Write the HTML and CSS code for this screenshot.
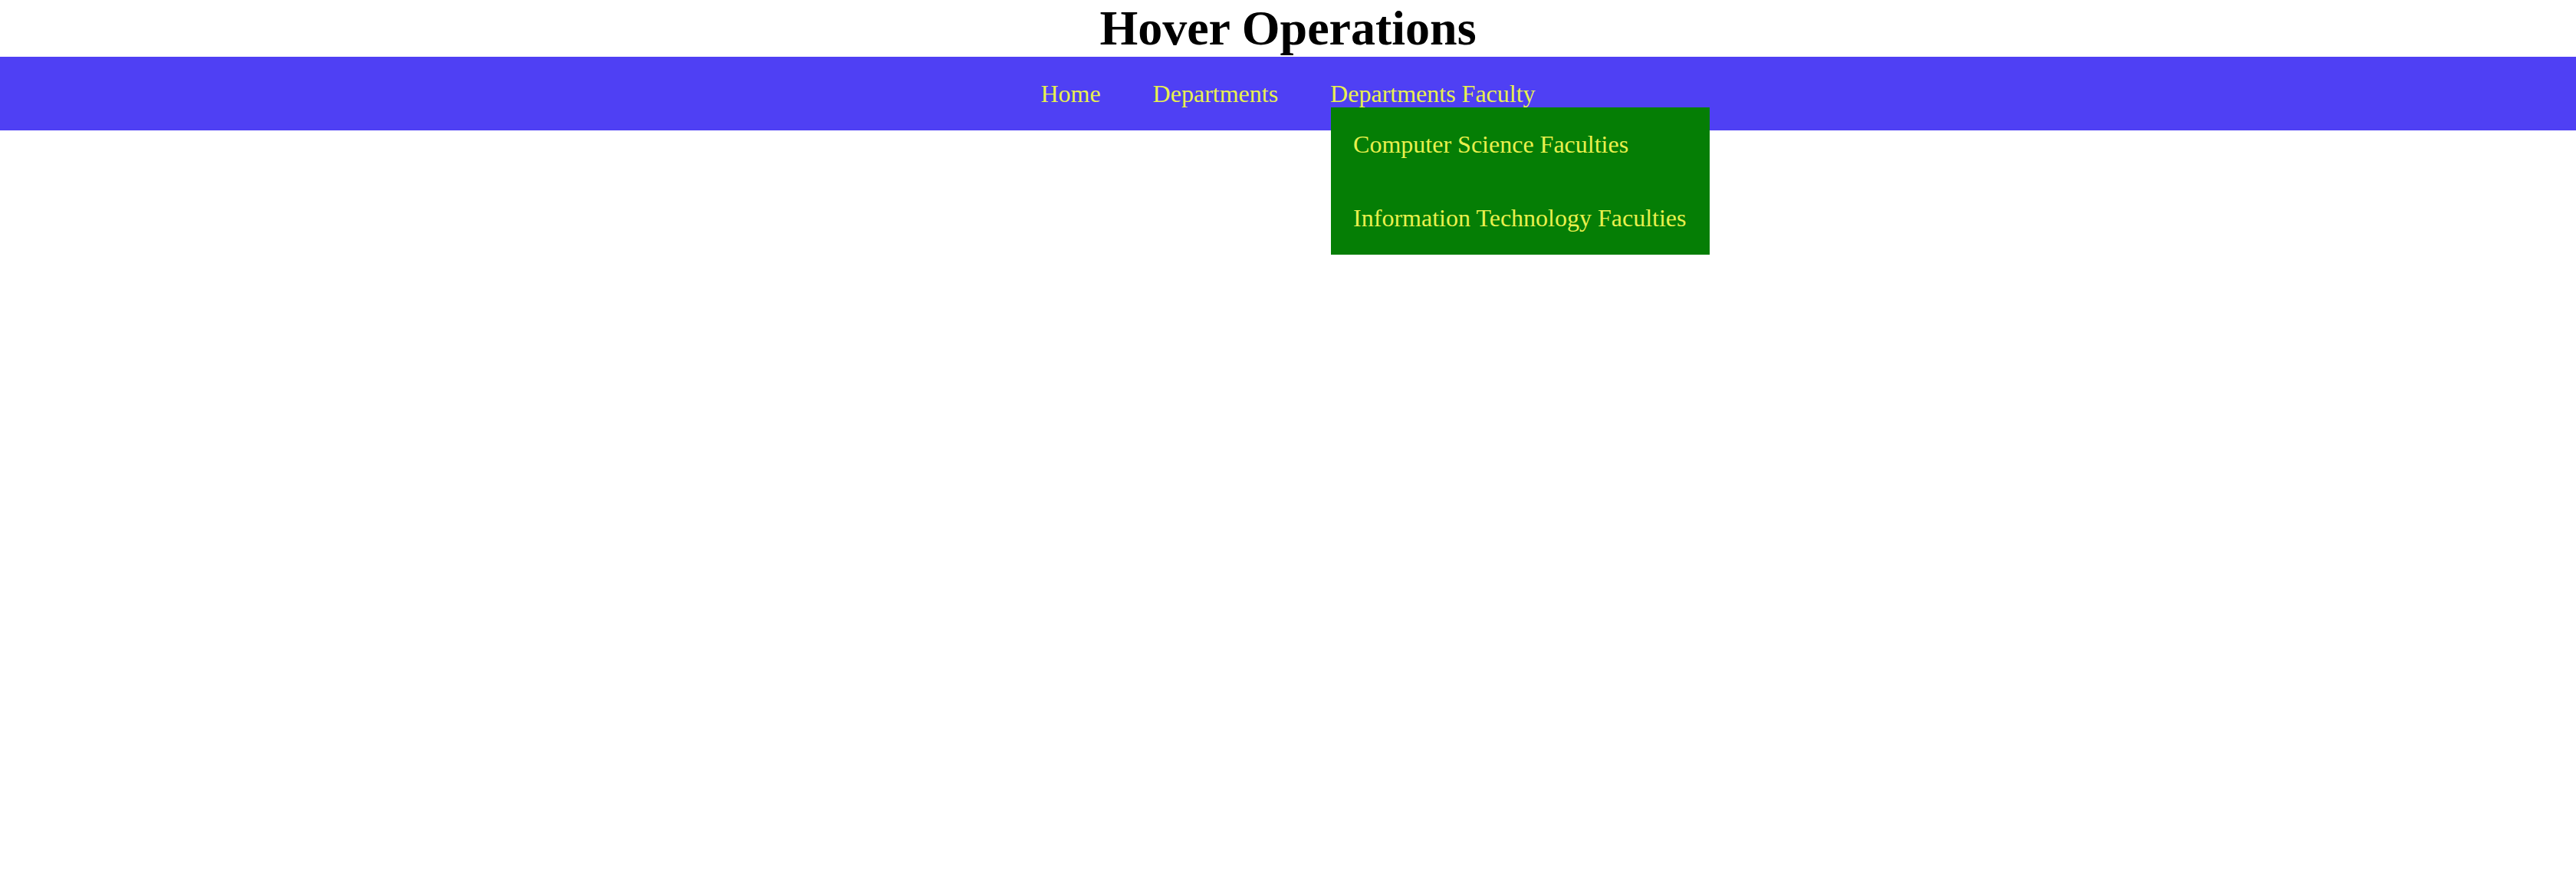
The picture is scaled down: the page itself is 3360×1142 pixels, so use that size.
FILE: index.html
```html
<!DOCTYPE html>
<html lang="en">
<head>
<meta charset="utf-8">
<title>Hover Operations</title>
<link rel="stylesheet" href="styles.css">
</head>
<body>
<h1 class="title">Hover Operations</h1>
<nav class="navbar">
  <ul class="menu">
    <li class="menu-item"><a class="menu-link" href="#">Home</a></li>
    <li class="menu-item"><a class="menu-link" href="#">Departments</a></li>
    <li class="menu-item has-dropdown">
      <a class="menu-link" href="#">Departments Faculty</a>
      <ul class="dropdown">
        <li class="dropdown-item"><a class="dropdown-link" href="#">Computer Science Faculties</a></li>
        <li class="dropdown-item"><a class="dropdown-link" href="#">Information Technology Faculties</a></li>
      </ul>
    </li>
  </ul>
</nav>
</body>
</html>
```
FILE: styles.css
```css
html, body {
  margin: 0;
  padding: 0;
  background: #ffffff;
  font-family: "Liberation Serif", "Times New Roman", serif;
}

body {
  min-height: 100vh;
}

.title {
  margin: 0;
  font-size: 64px;
  font-weight: bold;
  text-align: center;
  color: #000000;
}

.navbar {
  position: relative;
  z-index: 1;
  background: #4f40f4;
  height: 96px;
}

.menu {
  list-style: none;
  margin: 0;
  padding: 0;
  display: flex;
  justify-content: center;
  gap: 68px;
}

.menu-item {
  position: relative;
}

.menu-link {
  display: block;
  padding: 30px 0;
  font-size: 32px;
  line-height: 36px;
  color: #e8f04e;
  text-decoration: none;
  white-space: nowrap;
}

.dropdown {
  list-style: none;
  margin: 0;
  padding: 0;
  position: absolute;
  top: 66px;
  left: 1px;
  width: 494px;
  background: #057e05;
}

.dropdown-item {
  display: block;
}

.dropdown-link {
  display: block;
  padding: 30px 29px;
  font-size: 32px;
  line-height: 36px;
  color: #e8f04e;
  text-decoration: none;
  white-space: nowrap;
}
```
